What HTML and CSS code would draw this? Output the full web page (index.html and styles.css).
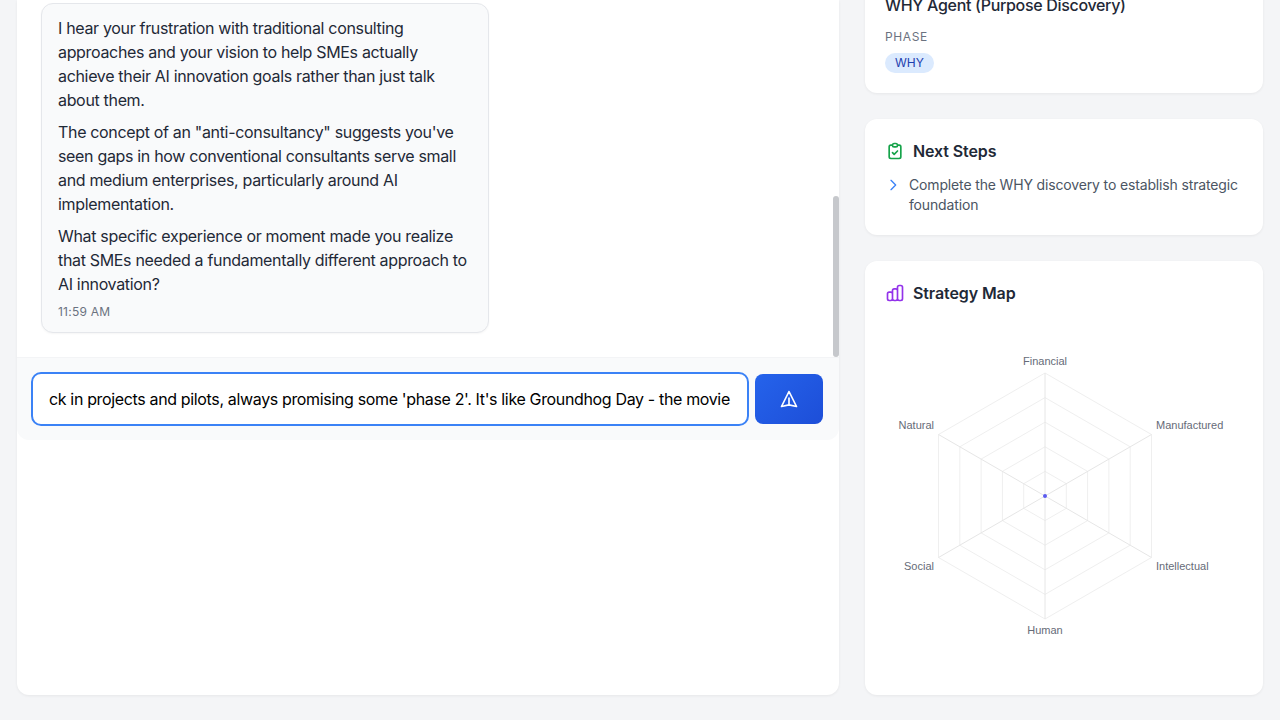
FILE: index.html
```html
<!DOCTYPE html>
<html lang="en">
<head>
  <meta charset="UTF-8" />
  <meta name="viewport" content="width=device-width, initial-scale=1.0" />
  <title>Strategy Chat</title>
  <link rel="stylesheet" href="styles.css">
</head>
<body>
  <div class="layout">
    <main class="chat-card">
      <div class="messages">
        <div class="bubble">
          <p>I hear your frustration with traditional consulting approaches and your vision to help SMEs actually achieve their AI innovation goals rather than just talk about them.</p>
          <p>The concept of an "anti-consultancy" suggests you've seen gaps in how conventional consultants serve small and medium enterprises, particularly around AI implementation.</p>
          <p>What specific experience or moment made you realize that SMEs needed a fundamentally different approach to AI innovation?</p>
          <div class="time">11:59 AM</div>
        </div>
        <div class="scroll-thumb"></div>
      </div>
      <div class="composer">
        <input class="composer-input" value="ck in projects and pilots, always promising some 'phase 2'. It's like Groundhog Day - the movie" />
        <button class="send-btn" aria-label="Send">
          <svg width="20" height="20" viewBox="0 0 24 24" fill="none" stroke="currentColor" stroke-width="2" stroke-linecap="round" stroke-linejoin="round"><path d="M12 19l9 2-9-18-9 18 9-2zm0 0v-8"/></svg>
        </button>
      </div>
    </main>

    <aside class="side">
      <section class="card">
        <h3 class="agent-name">WHY Agent (Purpose Discovery)</h3>
        <div class="label">Phase</div>
        <span class="badge">WHY</span>
      </section>

      <section class="card">
        <h3 class="card-title">
          <svg class="green" width="20" height="20" viewBox="0 0 24 24" fill="none" stroke="currentColor" stroke-width="2" stroke-linecap="round" stroke-linejoin="round"><path d="M9 5H7a2 2 0 00-2 2v12a2 2 0 002 2h10a2 2 0 002-2V7a2 2 0 00-2-2h-2M9 5a2 2 0 002 2h2a2 2 0 002-2M9 5a2 2 0 012-2h2a2 2 0 012 2m-6 9l2 2 4-4"/></svg>
          Next Steps
        </h3>
        <ul class="steps">
          <li>
            <svg class="blue" width="16" height="16" viewBox="0 0 24 24" fill="none" stroke="currentColor" stroke-width="2" stroke-linecap="round" stroke-linejoin="round"><path d="M9 5l7 7-7 7"/></svg>
            <span>Complete the WHY discovery to establish strategic foundation</span>
          </li>
        </ul>
      </section>

      <section class="card">
        <h3 class="card-title">
          <svg class="purple" width="20" height="20" viewBox="0 0 24 24" fill="none" stroke="currentColor" stroke-width="2" stroke-linecap="round" stroke-linejoin="round"><path d="M9 19v-6a2 2 0 00-2-2H5a2 2 0 00-2 2v6a2 2 0 002 2h2a2 2 0 002-2zm0 0V9a2 2 0 012-2h2a2 2 0 012 2v10m-6 0a2 2 0 002 2h2a2 2 0 002-2m0 0V5a2 2 0 012-2h2a2 2 0 012 2v14a2 2 0 01-2 2h-2a2 2 0 01-2-2z"/></svg>
          Strategy Map
        </h3>
        <svg class="radar" width="358" height="362" viewBox="19 0 358 362">
          <g class="rings">
            <polygon points="179,60 285.5,121.5 285.5,244.5 179,306 72.5,244.5 72.5,121.5"/>
            <polygon points="179,84.6 264.2,133.8 264.2,232.2 179,281.4 93.8,232.2 93.8,133.8"/>
            <polygon points="179,109.2 242.9,146.1 242.9,219.9 179,256.8 115.1,219.9 115.1,146.1"/>
            <polygon points="179,133.8 221.6,158.4 221.6,207.6 179,232.2 136.4,207.6 136.4,158.4"/>
            <polygon points="179,158.4 200.3,170.7 200.3,195.3 179,207.6 157.7,195.3 157.7,170.7"/>
          </g>
          <g class="spokes">
            <line x1="179" y1="183" x2="179" y2="60"/>
            <line x1="179" y1="183" x2="285.5" y2="121.5"/>
            <line x1="179" y1="183" x2="285.5" y2="244.5"/>
            <line x1="179" y1="183" x2="179" y2="306"/>
            <line x1="179" y1="183" x2="72.5" y2="244.5"/>
            <line x1="179" y1="183" x2="72.5" y2="121.5"/>
          </g>
          <circle cx="179" cy="183" r="2" fill="#5b5bf0"/>
          <g class="radar-labels">
            <text x="179" y="52" text-anchor="middle">Financial</text>
            <text x="290" y="116" text-anchor="start">Manufactured</text>
            <text x="290" y="257" text-anchor="start">Intellectual</text>
            <text x="179" y="321" text-anchor="middle">Human</text>
            <text x="68" y="257" text-anchor="end">Social</text>
            <text x="68" y="116" text-anchor="end">Natural</text>
          </g>
        </svg>
      </section>
    </aside>
  </div>
</body>
</html>
```

FILE: styles.css
```css
* {
  box-sizing: border-box;
}
body {
  margin: 0;
  height: 720px;
  overflow: hidden;
  background: #f4f5f7;
  font-family: Inter, "Liberation Sans", sans-serif;
  color: #1f2937;
}
.layout {
  display: flex;
  gap: 26px;
  height: 720px;
  padding: 0 17px 25px;
}
.chat-card {
  width: 822px;
  background: white;
  border-radius: 0 0 12px 12px;
  box-shadow: 0 1px 3px rgba(0,0,0,0.06);
}
.messages {
  position: relative;
  height: 357px;
  padding: 0 0 24px 24px;
  display: flex;
  flex-direction: column;
  justify-content: flex-end;
}
.bubble {
  width: 448px;
  padding: 12px 16px;
  background: #f9fafb;
  border: 1px solid #e5e7eb;
  border-radius: 12px;
  box-shadow: 0 1px 2px rgba(0,0,0,0.04);
  font-size: 16px;
  line-height: 24px;
  letter-spacing: -0.33px;
}
.bubble p {
  margin: 0 0 8px;
}
.time {
  font-size: 12px;
  line-height: 16px;
  letter-spacing: 0.02em;
  color: #6b7280;
}
.scroll-thumb {
  position: absolute;
  right: 0;
  bottom: 0;
  width: 6px;
  height: 161px;
  background: #c6c8cc;
  border-radius: 3px;
}
.composer {
  display: flex;
  align-items: center;
  gap: 6px;
  height: 83px;
  padding: 0 16px 0 14px;
  background: #f9fafb;
  border-top: 1px solid #f3f4f6;
  border-radius: 0 0 12px 12px;
}
.composer-input {
  flex: 1;
  min-width: 0;
  height: 54px;
  padding: 0 16px;
  background: white;
  border: 2px solid #3b82f6;
  border-radius: 10px;
  outline: none;
  font-family: inherit;
  font-size: 16px;
  letter-spacing: -0.35px;
  color: black;
}
.send-btn {
  width: 68px;
  height: 50px;
  display: flex;
  align-items: center;
  justify-content: center;
  border: none;
  border-radius: 8px;
  background: linear-gradient(135deg, #2563eb, #1d4ed8);
  color: white;
}
.side {
  width: 398px;
  display: flex;
  flex-direction: column;
  justify-content: flex-end;
  gap: 26px;
}
.card {
  flex-shrink: 0;
  padding: 20px;
  background: white;
  border-radius: 12px;
  box-shadow: 0 1px 3px rgba(0,0,0,0.06);
}
.agent-name {
  margin: 0 0 12px;
  font-size: 16px;
  line-height: 24px;
  font-weight: 500;
  letter-spacing: -0.32px;
}
.label {
  margin-bottom: 8px;
  font-size: 12px;
  line-height: 16px;
  letter-spacing: 0.05em;
  text-transform: uppercase;
  color: #6b7280;
}
.badge {
  display: inline-block;
  padding: 2px 10px;
  background: #dbeafe;
  border-radius: 10px;
  font-size: 12px;
  line-height: 16px;
  color: #1e40af;
  vertical-align: top;
}
.card-title {
  display: flex;
  align-items: center;
  gap: 8px;
  margin: 0;
  font-size: 16px;
  line-height: 24px;
  font-weight: 600;
  letter-spacing: -0.1px;
}
.green {
  color: #16a34a;
}
.blue {
  color: #3b82f6;
}
.purple {
  color: #9333ea;
}
.steps {
  list-style: none;
  margin: 12px 0 0;
  padding: 0;
}
.steps li {
  display: flex;
  gap: 8px;
  font-size: 14px;
  line-height: 20px;
  letter-spacing: -0.15px;
  color: #4b5563;
}
.steps svg {
  flex-shrink: 0;
  margin-top: 2px;
}
.radar {
  display: block;
  margin-top: 8px;
}
.rings polygon {
  fill: none;
  stroke: #efefef;
  stroke-width: 1;
}
.spokes line {
  stroke: #e6e6e6;
  stroke-width: 1;
}
.radar-labels text {
  font-family: "Liberation Sans", Arial, sans-serif;
  font-size: 11px;
  fill: #666b78;
}
```
